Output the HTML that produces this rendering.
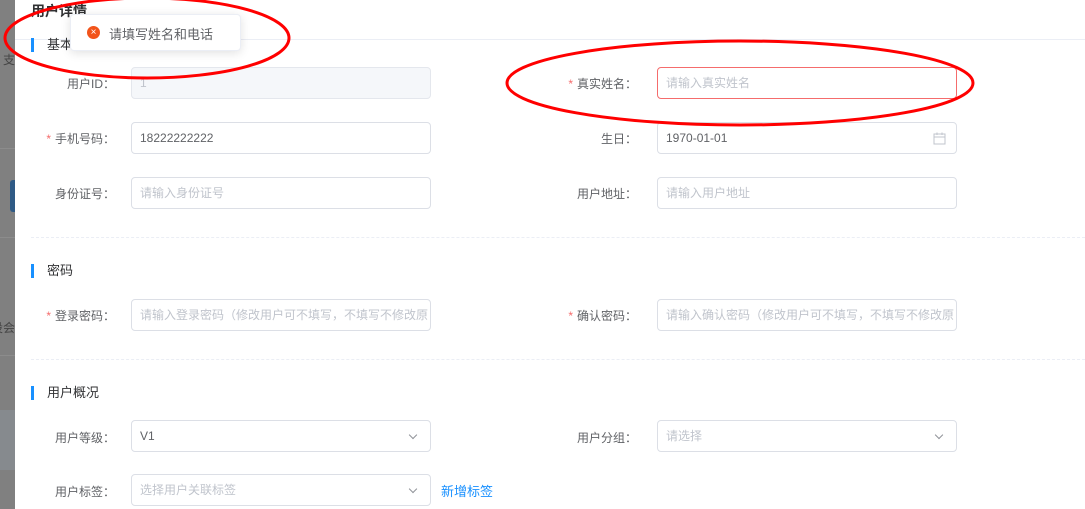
<!DOCTYPE html>
<html><head><meta charset="utf-8"><style>
*{box-sizing:border-box;margin:0;padding:0}
body{width:1085px;height:509px;overflow:hidden;background:#fff;font-family:"Liberation Sans","Noto Sans CJK SC",sans-serif;position:relative;font-size:12px;color:#606266}
.strip{position:absolute;left:0;top:0;width:15px;height:509px;background:#808080;overflow:hidden}
.a{position:absolute}
.lbl{position:absolute;width:110px;text-align:right;font-size:12px;color:#606266}
.lbl i{color:#f56c6c;font-style:normal;margin-right:4px}
.inp{position:absolute;width:300px;height:32px;border:1px solid #dcdfe6;border-radius:4px;padding-left:8px;line-height:30px;font-size:12px;color:#c0c4cc;background:#fff;white-space:nowrap;overflow:hidden}
.v{color:#606266}
.h{position:absolute;left:31px;font-size:13px;color:#303133;padding-left:13px;border-left:3px solid #1890ff;line-height:14px}
.dash{position:absolute;left:31px;width:1054px;border-top:1px dashed #ebeef5}
.chev{position:absolute;right:14px;top:11px;width:6px;height:6px;border-right:1.2px solid #909399;border-bottom:1.2px solid #909399;transform:rotate(45deg)}
</style></head><body>
<div class="strip">
<div class="a" style="left:0;top:148px;width:15px;border-top:1px solid #8c8c8c"></div>
<div class="a" style="left:0;top:237px;width:15px;border-top:1px solid #8c8c8c"></div>
<div class="a" style="left:0;top:355px;width:15px;border-top:1px solid #8c8c8c"></div>
<div class="a" style="left:0;top:410px;width:15px;height:60px;background:#868a8e"></div>
<div class="a" style="right:0;top:51px;font-size:12px;color:#444;white-space:nowrap">支</div>
<div class="a" style="right:0;top:319px;font-size:12px;color:#444;white-space:nowrap">设会</div>
<div class="a" style="left:10px;top:180px;width:5px;height:32px;background:#2f5a85;border-radius:3px 0 0 3px"></div>
</div>
<div class="a" style="left:31px;top:1px;font-size:14px;color:#303133;font-weight:bold">用户详情</div>
<div class="a" style="left:15px;top:39px;width:1070px;border-top:1px solid #ebeef5"></div>
<div class="h" style="top:38px;">基本</div>

<div class="lbl" style="left:5px;top:75px">用户ID：</div>
<div class="inp" style="left:131px;top:67px;background:#f5f7fa;border-color:#e4e7ed">1</div>
<div class="lbl" style="left:527px;top:75px"><i>*</i>真实姓名：</div>
<div class="inp" style="left:657px;top:67px;border-color:#f56c6c">请输入真实姓名</div>

<div class="lbl" style="left:5px;top:130px"><i>*</i>手机号码：</div>
<div class="inp v" style="left:131px;top:122px">18222222222</div>
<div class="lbl" style="left:527px;top:130px">生日：</div>
<div class="inp v" style="left:657px;top:122px">1970-01-01
<svg style="position:absolute;right:10px;top:9px" width="13" height="13" viewBox="0 0 13 13"><rect x="1" y="2" width="11" height="10" fill="none" stroke="#c0c4cc"/><line x1="1" y1="5" x2="12" y2="5" stroke="#c0c4cc"/><line x1="4" y1="0.5" x2="4" y2="3" stroke="#c0c4cc"/><line x1="9" y1="0.5" x2="9" y2="3" stroke="#c0c4cc"/></svg></div>

<div class="lbl" style="left:5px;top:185px">身份证号：</div>
<div class="inp" style="left:131px;top:177px">请输入身份证号</div>
<div class="lbl" style="left:527px;top:185px">用户地址：</div>
<div class="inp" style="left:657px;top:177px">请输入用户地址</div>

<div class="dash" style="top:237px"></div>
<div class="h" style="top:264px">密码</div>
<div class="lbl" style="left:5px;top:307px"><i>*</i>登录密码：</div>
<div class="inp" style="left:131px;top:299px">请输入登录密码（修改用户可不填写，不填写不修改原</div>
<div class="lbl" style="left:527px;top:307px"><i>*</i>确认密码：</div>
<div class="inp" style="left:657px;top:299px">请输入确认密码（修改用户可不填写，不填写不修改原</div>

<div class="dash" style="top:359px"></div>
<div class="h" style="top:386px">用户概况</div>
<div class="lbl" style="left:5px;top:429px">用户等级：</div>
<div class="inp v" style="left:131px;top:420px">V1<div class="chev"></div></div>
<div class="lbl" style="left:527px;top:429px">用户分组：</div>
<div class="inp" style="left:657px;top:420px">请选择<div class="chev"></div></div>
<div class="lbl" style="left:5px;top:483px">用户标签：</div>
<div class="inp" style="left:131px;top:474px">选择用户关联标签<div class="chev"></div></div>
<div class="a" style="left:441px;top:481px;font-size:13px;color:#1890ff">新增标签</div>

<div class="a" style="left:70px;top:14px;width:171px;height:37px;background:#fff;border-radius:4px;box-shadow:0 2px 10px rgba(0,0,0,0.12);border:1px solid #ebeef5">
<div class="a" style="left:16px;top:11px;width:13px;height:13px;border-radius:50%;background:#f2541b;color:#fff;font-size:10px;line-height:13px;text-align:center">×</div>
<div class="a" style="left:38px;top:9px;font-size:13px;color:#606266">请填写姓名和电话</div>
</div>
<svg class="a" style="left:0;top:0" width="1085" height="509"><ellipse cx="147" cy="38" rx="142" ry="40" fill="none" stroke="#f00" stroke-width="3"/><ellipse cx="740" cy="83" rx="233" ry="42" fill="none" stroke="#f00" stroke-width="3"/></svg>
</body></html>
